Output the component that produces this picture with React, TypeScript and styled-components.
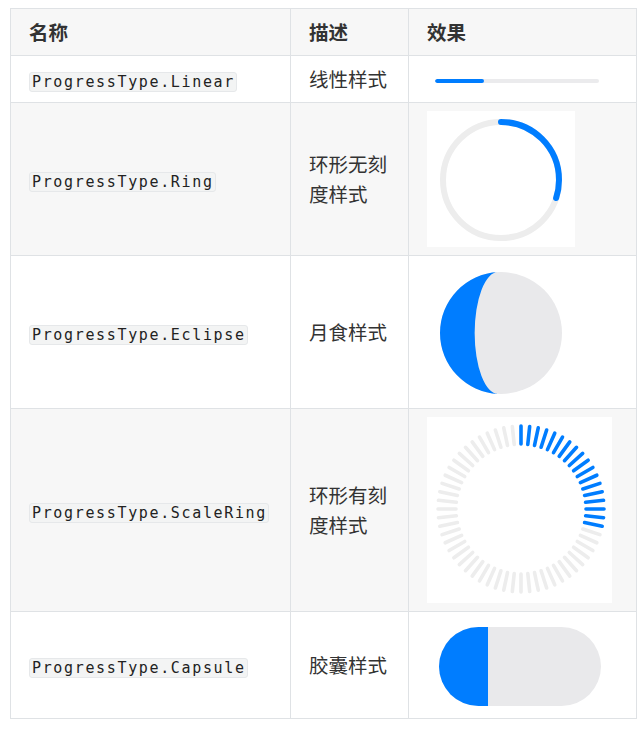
import React from 'react';
import styled, { createGlobalStyle } from 'styled-components';

const GlobalStyle = createGlobalStyle`
  body {
    margin: 0;
    background: #ffffff;
    font-family: "Noto Sans CJK SC", "Noto Sans", sans-serif;
    color: #333333;
  }
`;

const BLUE = '#007dff';
const GRAY = '#e9e9eb';

const Page = styled.div`
  padding: 8px 0 0 10px;
`;

const Table = styled.table`
  width: 626px;
  border-collapse: collapse;
  table-layout: fixed;
  font-size: 19.5px;
  line-height: 30px;
`;

const Row = styled.tr<{ $striped?: boolean }>`
  background: ${(p) => (p.$striped ? '#f7f7f7' : '#ffffff')};
`;

const HeadCell = styled.th`
  text-align: left;
  font-weight: 700;
  padding: 8px 18px;
  border: 1px solid #dfe2e5;
  background: #f7f7f7;
  color: #333333;
`;

const Cell = styled.td`
  padding: 8px 18px;
  border: 1px solid #dfe2e5;
  vertical-align: middle;
`;

const Code = styled.code`
  display: inline-block;
  font-family: "DejaVu Sans Mono", "Liberation Mono", monospace;
  font-size: 15px;
  letter-spacing: 1.65px;
  line-height: 18px;
  padding: 0 1px 0 2px;
  background: #f3f4f4;
  border: 1px solid #e6e8ea;
  border-radius: 3px;
  color: #222222;
  vertical-align: 0;
`;

const Frame = styled.div<{ $w: number; $h: number; $pad?: string }>`
  width: ${(p) => p.$w}px;
  height: ${(p) => p.$h}px;
  background: #ffffff;
  box-sizing: border-box;
  padding: ${(p) => p.$pad || '0'};
  svg {
    display: block;
  }
`;

const LinearBox = styled.div`
  height: 30px;
  display: flex;
  align-items: center;
  padding: 4px 0 0 8px;
  box-sizing: border-box;
`;

const LinearTrack = styled.div`
  width: 164px;
  height: 4px;
  border-radius: 2px;
  background: #ebebed;
  overflow: hidden;
`;

const LinearFill = styled.div`
  height: 100%;
  background: ${BLUE};
  border-radius: 2px;
`;

const Capsule = styled.div`
  width: 162px;
  height: 79px;
  border-radius: 40px;
  background: ${GRAY};
  overflow: hidden;
`;

const CapsuleFill = styled.div`
  height: 100%;
  background: ${BLUE};
`;

const VALUE = 0.3;

const RingIcon = () => {
  const r = 58;
  const c = 2 * Math.PI * r;
  return (
    <svg width="148" height="136" viewBox="0 0 148 136">
      <circle cx="74" cy="69" r={r} fill="none" stroke="#ededed" strokeWidth="6" />
      <circle
        cx="74"
        cy="69"
        r={r}
        fill="none"
        stroke={BLUE}
        strokeWidth="6"
        strokeLinecap="round"
        strokeDasharray={`${c * VALUE} ${c}`}
        transform="rotate(-90 74 69)"
      />
    </svg>
  );
};

// gray disc with a blue crescent on its left side
const EclipseIcon = () => {
  const cx = 74;
  const cy = 69;
  const r = 61;
  const x = cx - 3;
  const top = cy - Math.sqrt(r * r - 9);
  const bottom = cy + Math.sqrt(r * r - 9);
  return (
    <svg width="148" height="136" viewBox="0 0 148 136">
      <circle cx={cx} cy={cy} r={r} fill={GRAY} />
      <path d={`M ${x} ${top} A ${r} ${r} 0 0 0 ${x} ${bottom} A 23 ${r - 1} 0 0 1 ${x} ${top} Z`} fill={BLUE} />
    </svg>
  );
};

const ScaleRingIcon = () => {
  const count = 60;
  const cx = 94;
  const cy = 92;
  const lit = Math.round(count * VALUE);
  return (
    <svg width="185" height="186" viewBox="0 0 185 186">
      {Array.from({ length: count }).map((_, i) => {
        const a = ((i * 360) / count) * (Math.PI / 180);
        const sin = Math.sin(a);
        const cos = Math.cos(a);
        return (
          <line
            key={i}
            x1={cx + 65 * sin}
            y1={cy - 65 * cos}
            x2={cx + 83 * sin}
            y2={cy - 83 * cos}
            stroke={i < lit ? BLUE : '#ededed'}
            strokeWidth="3.6"
            strokeLinecap="round"
          />
        );
      })}
    </svg>
  );
};

const rows = [
  {
    name: 'ProgressType.Linear',
    desc: '线性样式',
    preview: (
      <LinearBox>
        <LinearTrack>
          <LinearFill style={{ width: `${VALUE * 100}%` }} />
        </LinearTrack>
      </LinearBox>
    ),
  },
  {
    name: 'ProgressType.Ring',
    desc: '环形无刻度样式',
    preview: (
      <Frame $w={148} $h={136}>
        <RingIcon />
      </Frame>
    ),
  },
  {
    name: 'ProgressType.Eclipse',
    desc: '月食样式',
    preview: (
      <Frame $w={148} $h={136}>
        <EclipseIcon />
      </Frame>
    ),
  },
  {
    name: 'ProgressType.ScaleRing',
    desc: '环形有刻度样式',
    preview: (
      <Frame $w={185} $h={186}>
        <ScaleRingIcon />
      </Frame>
    ),
  },
  {
    name: 'ProgressType.Capsule',
    desc: '胶囊样式',
    preview: (
      <Frame $w={186} $h={90} $pad="7px 0 0 12px">
        <Capsule>
          <CapsuleFill style={{ width: `${VALUE * 100}%` }} />
        </Capsule>
      </Frame>
    ),
  },
];

const App: React.FC = () => {
  return (
    <Page>
      <GlobalStyle />
      <Table>
        <colgroup>
          <col style={{ width: 280 }} />
          <col style={{ width: 118 }} />
          <col style={{ width: 228 }} />
        </colgroup>
        <thead>
          <tr>
            <HeadCell>名称</HeadCell>
            <HeadCell>描述</HeadCell>
            <HeadCell>效果</HeadCell>
          </tr>
        </thead>
        <tbody>
          {rows.map((row, index) => (
            <Row key={row.name} $striped={index % 2 === 1}>
              <Cell>
                <Code>{row.name}</Code>
              </Cell>
              <Cell>{row.desc}</Cell>
              <Cell>{row.preview}</Cell>
            </Row>
          ))}
        </tbody>
      </Table>
    </Page>
  );
};

export default App;
